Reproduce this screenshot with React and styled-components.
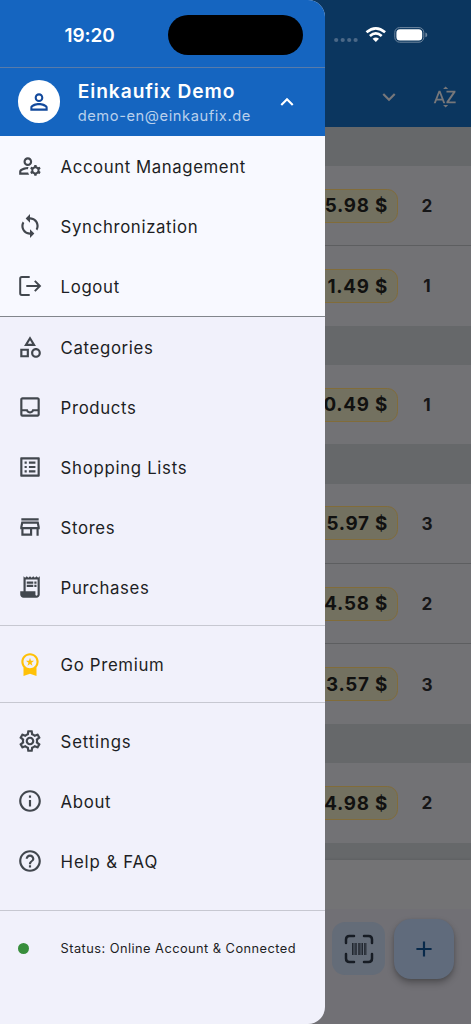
import React from 'react'
import styled, { createGlobalStyle } from 'styled-components'
import {
  MdPersonOutline,
  MdOutlineManageAccounts,
  MdSync,
  MdOutlineCategory,
  MdOutlineInbox,
  MdOutlineListAlt,
  MdOutlineStore,
  MdReceiptLong,
  MdWorkspacePremium,
  MdOutlineSettings,
  MdInfoOutline,
  MdHelpOutline,
  MdSortByAlpha,
  MdKeyboardArrowDown,
  MdKeyboardArrowUp,
  MdAdd,
} from 'react-icons/md'

const COLORS = {
  BLUE: '#1565c0',
  BLUE_DIM: '#0b365f',
  DRAWER: '#f1f1fb',
  DRAWER_LIGHT: '#f8f9ff',
  TEXT: '#1d1e24',
  ICON: '#42474e',
  PAGE: '#66686a',
  ROW: '#727275',
  GREEN: '#388e3c',
  AMBER: '#ffc107',
}

const GlobalStyle = createGlobalStyle`
  * {
    box-sizing: border-box;
  }
  body {
    margin: 0;
    overflow: hidden;
    font-family: Inter, 'Liberation Sans', sans-serif;
    color: ${COLORS.TEXT};
  }
  svg {
    display: block;
    flex: none;
  }
`

const Screen = styled.div`
  position: relative;
  height: 1024px;
  overflow: hidden;
  background-color: ${COLORS.PAGE};
`

const StatusBar = styled.div`
  position: absolute;
  top: 0;
  left: 0;
  z-index: 3;
  display: flex;
  align-items: center;
  width: 100%;
  height: 70px;
  padding-left: 64.6px;
  color: #fff;
`

const Time = styled.div`
  width: 103.6px;
  font-size: 19px;
  font-weight: 600;
  letter-spacing: -0.1px;
`

const Island = styled.div`
  width: 134.5px;
  height: 39.5px;
  border-radius: 20px;
  background-color: #000;
`

const Signals = styled.div`
  display: flex;
  align-items: center;
  margin-left: 30.1px;
`

const Page = styled.div`
  display: flex;
  flex-direction: column;
  height: 100%;
`

const AppBar = styled.div`
  display: flex;
  justify-content: flex-end;
  align-items: center;
  gap: 30px;
  flex: none;
  height: 126.5px;
  padding: 67px 13px 0 0;
  background-color: ${COLORS.BLUE_DIM};
  color: #77777a;
`

const Group = styled.div`
  flex: none;
  margin-top: 39.4px;
  background-color: ${COLORS.ROW};
`

const Product = styled.div`
  display: flex;
  justify-content: flex-end;
  align-items: center;
  height: ${({ $last }) => ($last ? 79.4 : 80.3)}px;
  border-bottom: ${({ $last }) => ($last ? 'none' : '1px solid #5d5e60')};
`

const Price = styled.div`
  display: flex;
  justify-content: flex-end;
  align-items: center;
  min-width: 90px;
  height: 34px;
  padding: 1.6px 9px 0 0;
  border: 1px solid #816c3a;
  border-radius: 10.5px;
  background-color: #737160;
  color: #111110;
  font-size: 18.8px;
  font-weight: 700;
  line-height: 24px;
  letter-spacing: 0.75px;
`

const Quantity = styled.div`
  width: 73px;
  padding-right: 15px;
  color: #161618;
  font-size: 17.2px;
  font-weight: 700;
  text-align: center;
`

const Footer = styled.div`
  display: flex;
  flex-direction: column;
  flex: 1;
  margin-top: 17.4px;
  background-color: #717075;
  box-shadow: 0 -1px 2px rgba(0, 0, 0, 0.08);
`

const Summary = styled.div`
  height: 49.5px;
  background-color: #737375;
`

const Actions = styled.div`
  display: flex;
  justify-content: flex-end;
  gap: 8.5px;
  padding: 9.9px 17.5px 0 0;
`

const ScanButton = styled.div`
  display: flex;
  justify-content: center;
  align-items: center;
  width: 53px;
  height: 53.5px;
  margin-top: 2.6px;
  border-radius: 13px;
  background-color: #646c78;
`

const AddButton = styled.div`
  display: flex;
  justify-content: center;
  align-items: center;
  width: 60px;
  height: 60px;
  border-radius: 17px;
  background-color: #606b7c;
  box-shadow: 0 4px 7px rgba(0, 0, 0, 0.28), 0 1px 3px rgba(0, 0, 0, 0.1);
  color: #08294a;
`

const DrawerPanel = styled.div`
  position: absolute;
  top: 0;
  left: 0;
  z-index: 2;
  display: flex;
  flex-direction: column;
  width: 325.3px;
  height: 1024px;
  border-radius: 0 17px 17px 0;
  overflow: hidden;
  background-color: ${COLORS.DRAWER};
`

const SafeArea = styled.div`
  flex: none;
  height: 67.5px;
  border-bottom: 1px solid #587ba9;
  background-color: ${COLORS.BLUE};
`

const AccountHeader = styled.div`
  display: flex;
  align-items: center;
  flex: none;
  height: 68.5px;
  padding: 0 25.6px 0 17.5px;
  background-color: ${COLORS.BLUE};
  color: #fff;
`

const Avatar = styled.div`
  display: flex;
  justify-content: center;
  align-items: center;
  width: 42.8px;
  height: 42.8px;
  margin-right: 17.4px;
  border-radius: 50%;
  background-color: #fff;
  color: #12499c;
`

const AccountText = styled.div`
  display: flex;
  flex-direction: column;
  gap: 3px;
  flex: 1;
  padding-top: 1.8px;
  white-space: nowrap;
`

const AccountName = styled.div`
  font-size: 19.2px;
  font-weight: 600;
  line-height: 24px;
  letter-spacing: 0.93px;
`

const AccountEmail = styled.div`
  color: #b9d0ec;
  font-size: 14.7px;
  line-height: 20px;
  letter-spacing: 0.56px;
`

const Menu = styled.div`
  flex: none;
  background-color: ${({ $light }) =>
    $light ? COLORS.DRAWER_LIGHT : 'transparent'};
`

const MenuItem = styled.div`
  display: flex;
  align-items: center;
  height: 60px;
  padding-left: 17.2px;
  color: ${({ $color }) => $color || COLORS.ICON};
`

const MenuLabel = styled.div`
  margin-left: 17.4px;
  padding-top: 2px;
  color: ${COLORS.TEXT};
  font-size: 16.8px;
  letter-spacing: ${({ $tracking }) => $tracking || 0.65}px;
`

const Divider = styled.div`
  flex: none;
  height: 1px;
  margin: ${({ $space }) => $space || 0}px 0;
  background-color: ${({ $strong }) => ($strong ? '#82868c' : '#c7c8d1')};
`

const ConnectionStatus = styled.div`
  display: flex;
  align-items: center;
  gap: 31.3px;
  height: 38.4px;
  padding-left: 18.3px;
  font-size: 12.8px;
  letter-spacing: 0.46px;
  white-space: nowrap;
`

const Dot = styled.div`
  width: 11px;
  height: 11px;
  border-radius: 50%;
  background-color: ${COLORS.GREEN};
`

const LogoutIcon = ({ size }) => (
  <svg width={size} height={size} viewBox="0 0 26 26" fill="none">
    <path
      d="M12.7 4.1H4.8Q3.2 4.1 3.2 5.7V20.3Q3.2 21.9 4.8 21.9H12.7M9.3 13H22.7M17.8 7.9L22.9 13L17.8 18.1"
      stroke="currentColor"
      strokeWidth="2"
    />
  </svg>
)

const ScanIcon = () => (
  <svg width="30" height="30" viewBox="0 0 30 30" fill="none">
    <path
      d="M2 9V5.5Q2 2 5.5 2H10M20 2H24.5Q28 2 28 5.5V9M28 20V24.5Q28 28 24.5 28H20M10 28H5.5Q2 28 2 24.5V20"
      stroke="#171c24"
      strokeWidth="2.5"
      strokeLinecap="round"
    />
    <path
      d="M8.8 9V21M12 9V21M15 9V21M18.2 9V21M20.9 9V21"
      stroke="#171c24"
      strokeWidth="1.3"
    />
    <path d="M10.4 9V21M16.4 9V21M22.2 9V21" stroke="#171c24" strokeWidth="0.5" />
  </svg>
)

const SignalIcons = () => (
  <svg width="96" height="20" viewBox="0 0 96 20" fill="none">
    <g fill="#4b6887">
      <circle cx="3.2" cy="15" r="2.1" />
      <circle cx="9.7" cy="15" r="2.1" />
      <circle cx="16.2" cy="15" r="2.1" />
      <circle cx="22.6" cy="15" r="2.1" />
    </g>
    <g stroke="#fff" strokeWidth="2.7">
      <path d="M33.5 7.3Q42.8-.5 52.1 7.3" />
      <path d="M36.9 11Q42.8 5.8 48.7 11" />
    </g>
    <path d="M39.6 13.8Q42.8 11 46 13.8L42.8 17Z" fill="#fff" />
    <rect x="61.8" y="2.6" width="29" height="14.6" rx="4.8" stroke="#6f879f" />
    <rect x="63.4" y="4.2" width="25.8" height="11.4" rx="3.5" fill="#fff" />
    <path d="M92.4 7.5Q94.3 8 94.3 9.9T92.4 12.3Z" fill="#6f879f" />
  </svg>
)

const groups = [
  [['5.98 $', 2], ['1.49 $', 1]],
  [['0.49 $', 1]],
  [['5.97 $', 3], ['4.58 $', 2], ['3.57 $', 3]],
  [['4.98 $', 2]],
]

const accountItems = [
  {
    label: 'Account Management',
    Icon: MdOutlineManageAccounts,
    tracking: 0.58,
  },
  { label: 'Synchronization', Icon: MdSync },
  { label: 'Logout', Icon: LogoutIcon },
]

const listItems = [
  { label: 'Categories', Icon: MdOutlineCategory },
  { label: 'Products', Icon: MdOutlineInbox },
  { label: 'Shopping Lists', Icon: MdOutlineListAlt, tracking: 0.7 },
  { label: 'Stores', Icon: MdOutlineStore },
  { label: 'Purchases', Icon: MdReceiptLong },
]

const premiumItems = [
  { label: 'Go Premium', Icon: MdWorkspacePremium, color: COLORS.AMBER },
]

const helpItems = [
  { label: 'Settings', Icon: MdOutlineSettings, tracking: 0.84 },
  { label: 'About', Icon: MdInfoOutline },
  { label: 'Help & FAQ', Icon: MdHelpOutline, tracking: 0.85 },
]

const MenuSection = ({ items, light }) => (
  <Menu $light={light}>
    {items.map(({ label, Icon, color, tracking }) => (
      <MenuItem key={label} $color={color}>
        <Icon size={26} />
        <MenuLabel $tracking={tracking}>{label}</MenuLabel>
      </MenuItem>
    ))}
  </Menu>
)

const ShoppingList = () => (
  <Page>
    <AppBar>
      <MdKeyboardArrowDown size={26} />
      <MdSortByAlpha size={26} />
    </AppBar>
    {groups.map((products, index) => (
      <Group key={index}>
        {products.map(([price, quantity], i) => (
          <Product key={price} $last={i === products.length - 1}>
            <Price>{price}</Price>
            <Quantity>{quantity}</Quantity>
          </Product>
        ))}
      </Group>
    ))}
    <Footer>
      <Summary />
      <Actions>
        <ScanButton>
          <ScanIcon />
        </ScanButton>
        <AddButton>
          <MdAdd size={26} />
        </AddButton>
      </Actions>
    </Footer>
  </Page>
)

const Drawer = () => (
  <DrawerPanel>
    <SafeArea />
    <AccountHeader>
      <Avatar>
        <MdPersonOutline size={26} />
      </Avatar>
      <AccountText>
        <AccountName>Einkaufix Demo</AccountName>
        <AccountEmail>demo-en@einkaufix.de</AccountEmail>
      </AccountText>
      <MdKeyboardArrowUp size={26} />
    </AccountHeader>
    <MenuSection items={accountItems} light />
    <Divider $strong />
    <MenuSection items={listItems} />
    <Divider $space={8} />
    <MenuSection items={premiumItems} />
    <Divider $space={8} />
    <MenuSection items={helpItems} />
    <Divider $space={18.5} />
    <ConnectionStatus>
      <Dot />
      Status: Online Account &amp; Connected
    </ConnectionStatus>
  </DrawerPanel>
)

const App = () => (
  <Screen>
    <GlobalStyle />
    <ShoppingList />
    <Drawer />
    <StatusBar>
      <Time>19:20</Time>
      <Island />
      <Signals>
        <SignalIcons />
      </Signals>
    </StatusBar>
  </Screen>
)

export default App
